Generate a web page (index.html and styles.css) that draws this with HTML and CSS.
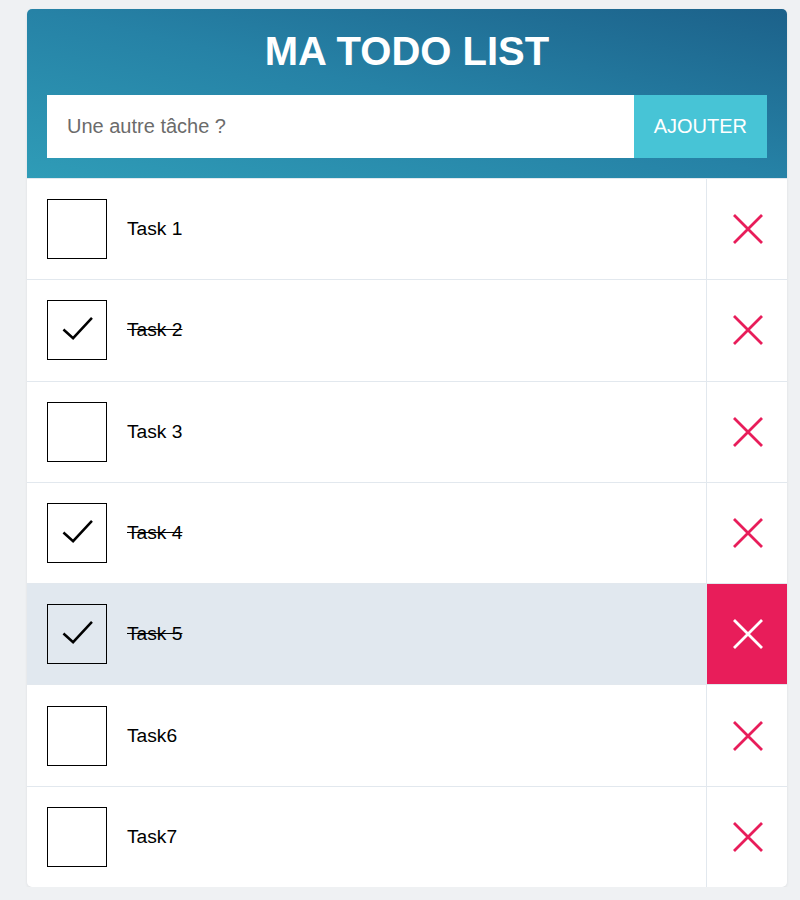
FILE: index.html
```html
<!DOCTYPE html>
<html lang="fr">
<head>
<meta charset="utf-8">
<title>Ma Todo List</title>
<link rel="stylesheet" href="styles.css">
</head>
<body>
<div class="page">
  <div class="card">
    <header class="header">
      <h1 class="title">MA TODO LIST</h1>
      <form class="add-form">
        <input class="add-input" type="text" placeholder="Une autre tâche ?">
        <button class="add-btn" type="button">AJOUTER</button>
      </form>
    </header>
    <ul class="list">
      <li class="item">
        <div class="item-main"><span class="check"></span><span class="label">Task 1</span></div>
        <div class="del"><svg viewBox="0 0 30 30" class="x"><path d="M1 1L29 29M29 1L1 29"/></svg></div>
      </li>
      <li class="item done">
        <div class="item-main"><span class="check"><svg viewBox="0 0 60 60" class="tick"><path d="M17 30.5L27 39.5L46.5 18.5"/></svg></span><span class="label">Task 2</span></div>
        <div class="del"><svg viewBox="0 0 30 30" class="x"><path d="M1 1L29 29M29 1L1 29"/></svg></div>
      </li>
      <li class="item">
        <div class="item-main"><span class="check"></span><span class="label">Task 3</span></div>
        <div class="del"><svg viewBox="0 0 30 30" class="x"><path d="M1 1L29 29M29 1L1 29"/></svg></div>
      </li>
      <li class="item done">
        <div class="item-main"><span class="check"><svg viewBox="0 0 60 60" class="tick"><path d="M17 30.5L27 39.5L46.5 18.5"/></svg></span><span class="label">Task 4</span></div>
        <div class="del"><svg viewBox="0 0 30 30" class="x"><path d="M1 1L29 29M29 1L1 29"/></svg></div>
      </li>
      <li class="item done hover">
        <div class="item-main"><span class="check"><svg viewBox="0 0 60 60" class="tick"><path d="M17 30.5L27 39.5L46.5 18.5"/></svg></span><span class="label">Task 5</span></div>
        <div class="del"><svg viewBox="0 0 30 30" class="x"><path d="M1 1L29 29M29 1L1 29"/></svg></div>
      </li>
      <li class="item">
        <div class="item-main"><span class="check"></span><span class="label">Task6</span></div>
        <div class="del"><svg viewBox="0 0 30 30" class="x"><path d="M1 1L29 29M29 1L1 29"/></svg></div>
      </li>
      <li class="item">
        <div class="item-main"><span class="check"></span><span class="label">Task7</span></div>
        <div class="del"><svg viewBox="0 0 30 30" class="x"><path d="M1 1L29 29M29 1L1 29"/></svg></div>
      </li>
    </ul>
  </div>
</div>
</body>
</html>
```

FILE: styles.css
```css
* { box-sizing: border-box; }

html, body {
  margin: 0;
  padding: 0;
  background: #eff1f3;
  font-family: "Liberation Sans", Arial, sans-serif;
}

.page {
  padding: 9px 13px 0 27px;
}

.card {
  width: 760px;
  background: #fff;
  border-radius: 5px;
  overflow: hidden;
  box-shadow: 0 1px 3px rgba(0, 0, 0, 0.08);
}

.header {
  height: 170px;
  padding: 19px 20px 0 20px;
  background: linear-gradient(to right top, #2f9cb7 0%, #2682a6 50%, #1c618a 100%);
  border-bottom: 1px solid #e2e8ee;
}

.title {
  margin: 0;
  color: #fff;
  font-size: 40px;
  font-weight: bold;
  line-height: 46px;
  text-align: center;
}

.add-form {
  display: flex;
  margin-top: 21px;
  height: 63px;
}

.add-input {
  flex: 1;
  border: 0;
  margin: 0;
  padding: 0 20px;
  font-family: inherit;
  font-size: 20px;
  color: #333;
  background: #fff;
  outline: none;
}

.add-input::placeholder {
  color: #6b6b6b;
}

.add-btn {
  border: 0;
  margin: 0;
  padding: 0 20px;
  background: #47c4d6;
  color: #fff;
  font-family: inherit;
  font-size: 20px;
  cursor: pointer;
}

.list {
  list-style: none;
  margin: 0;
  padding: 0;
}

.item {
  display: flex;
  height: 101.3px;
  border-bottom: 1px solid #e2e8ee;
}

.item:last-child {
  border-bottom: 0;
  height: 100.3px;
}

.item-main {
  flex: 1;
  display: flex;
  align-items: center;
  padding: 0 20px;
}

.check {
  width: 60px;
  height: 60px;
  border: 1px solid #000;
  flex: none;
  display: block;
}

.tick {
  display: block;
  width: 58px;
  height: 58px;
  margin: -1px;
  fill: none;
  stroke: #000;
  stroke-width: 2.6;
}

.label {
  margin-left: 20px;
  font-size: 19.2px;
  color: #000;
}

.done .label {
  text-decoration: line-through;
}

.del {
  width: 81px;
  flex: none;
  border-left: 1px solid #e2e8ee;
  display: flex;
  align-items: center;
  justify-content: center;
  padding-left: 1px;
}

.x {
  width: 30px;
  height: 30px;
  fill: none;
  stroke: #e81d5a;
  stroke-width: 2.8;
}

.hover {
  background: #e1e8ef;
}

.hover .del {
  background: #e81d5a;
}

.hover .x {
  stroke: #fff;
}
```
